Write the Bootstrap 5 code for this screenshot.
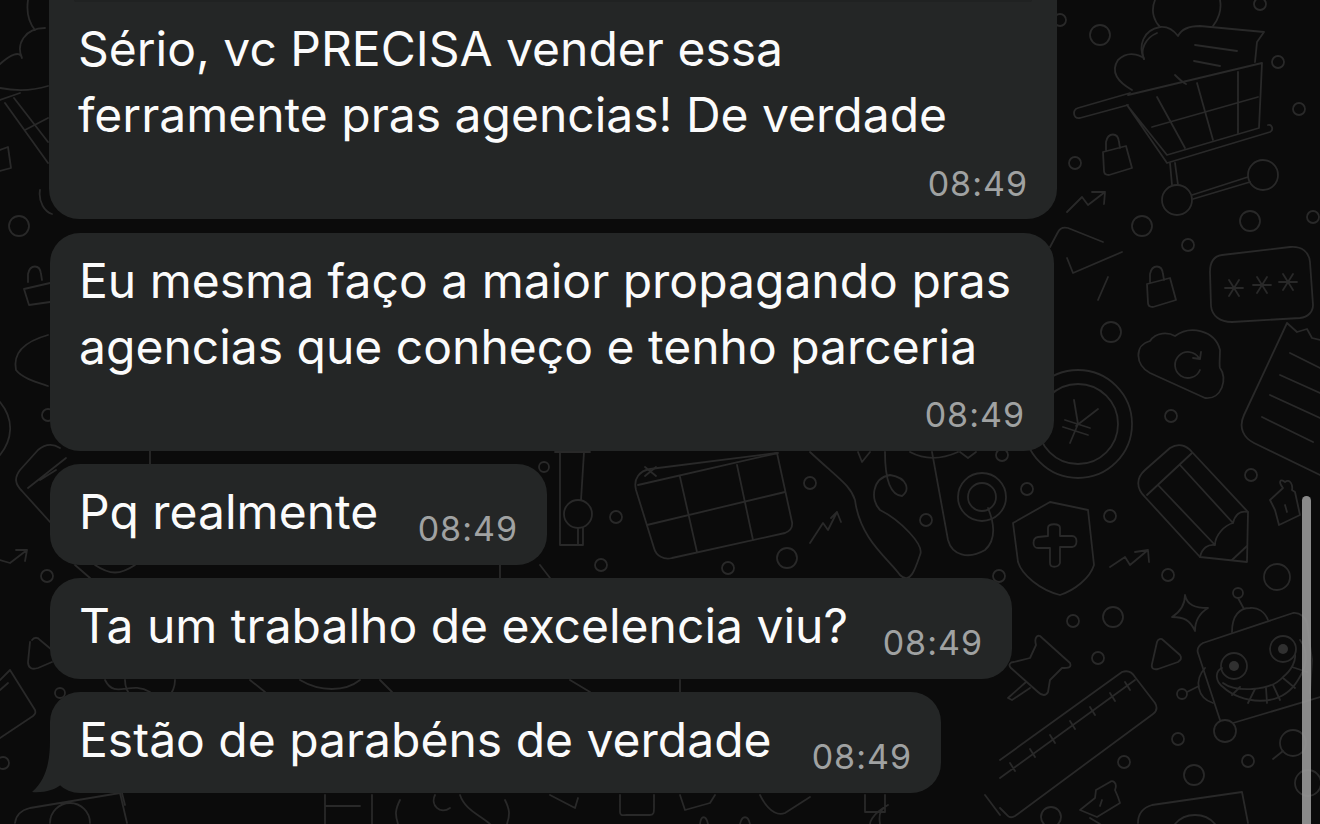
<!DOCTYPE html>
<html lang="pt-BR">
<head>
    <meta charset="UTF-8">
    <meta name="viewport" content="width=device-width, initial-scale=1.0">
    <title>Conversa</title>
    <link href="https://cdn.jsdelivr.net/npm/bootstrap@5.3.3/dist/css/bootstrap.min.css" rel="stylesheet">
    <style>
        html, body { height: 100%; }
        body {
            background: #0b0b0b;
            font-family: "Inter", "Liberation Sans", sans-serif;
            overflow: hidden;
        }
        .chat-screen { width: 1320px; height: 824px; overflow: hidden; }
        .doodles { position: absolute; left: 0; top: 0; width: 1320px; height: 824px; }
        .doodles * { fill: none; stroke: #292929; stroke-width: 1.8; stroke-linecap: round; stroke-linejoin: round; }
        .doodles .dot { fill: #303030; stroke: none; }
        .chat-list { gap: 13px; padding-left: 50px; }
        .bubble {
            background: #242626;
            border-radius: 30px;
            color: #fbfbfb;
            padding: 15px 29px 16px 29px;
        }
        .bubble-text { font-size: 48px; line-height: 66px; letter-spacing: 0; margin: 0; white-space: nowrap; }
        .bubble-time { font-size: 34px; line-height: 40px; color: #a0a2a2; letter-spacing: 1px; white-space: nowrap; }
        .time-below { margin-top: 15px; }
        .time-side { margin-top: 30px; }
        .b-first { width: 1008px; margin-left: -1px; height: 219px; padding-top: 16px; border-radius: 0 0 30px 30px; margin-bottom: 1px; }
        .b-first .time-below { margin-top: 16px; }
        .b-second { width: 1004px; height: 218px; }
        .b-third { width: 497px; height: 101px; }
        .b-fourth { width: 962px; height: 101px; }
        .b-fifth { width: 891px; height: 101px; }
        .top-seam { left: 25px; right: 25px; top: 0; height: 2px; background: #202222; border-radius: 0 0 4px 4px; }
        .bubble-tail { position: absolute; left: -18px; bottom: 0; width: 30px; height: 53px; }
        .scroll-thumb {
            position: absolute; left: 1302px; top: 496px; width: 9px; height: 340px;
            background: rgba(150, 150, 150, .92); border-radius: 5px;
        }
    </style>
</head>
<body>
    <div class="chat-screen position-relative">
        <!-- papel de parede -->
        <svg class="doodles" viewBox="0 0 1320 824" aria-hidden="true">
            <!-- circulos soltos -->
            <circle cx="1100" cy="35" r="10"/><circle cx="1278" cy="62" r="6"/><circle cx="1299" cy="109" r="6"/>
            <circle cx="1075" cy="163" r="6"/><circle cx="1142" cy="226" r="10"/><circle cx="1188" cy="245" r="6"/>
            <circle cx="1250" cy="221" r="10"/><circle cx="1313" cy="217" r="6"/><circle cx="1260" cy="4" r="6"/>
            <circle cx="1060" cy="20" r="6"/><circle cx="1111" cy="332" r="10"/><circle cx="1171" cy="416" r="6"/>
            <circle cx="1251" cy="475" r="6"/><circle cx="1027" cy="489" r="6"/><circle cx="1110" cy="516" r="6"/>
            <circle cx="1168" cy="575" r="6"/><circle cx="1277" cy="577" r="13"/><circle cx="1113" cy="617" r="10"/>
            <circle cx="1073" cy="621" r="6"/><circle cx="1098" cy="658" r="6"/><circle cx="1248" cy="761" r="6"/>
            <circle cx="1194" cy="775" r="10"/><circle cx="1178" cy="739" r="6"/><circle cx="1124" cy="762" r="6"/>
            <circle cx="1051" cy="817" r="10"/><circle cx="1308" cy="783" r="13"/><circle cx="616" cy="517" r="6"/>
            <circle cx="601" cy="565" r="6"/><circle cx="728" cy="568" r="6"/><circle cx="787" cy="558" r="10"/>
            <circle cx="810" cy="483" r="6"/><circle cx="926" cy="520" r="6"/><circle cx="1002" cy="455" r="6"/>
            <circle cx="999" cy="576" r="6"/><circle cx="19" cy="226" r="10"/><circle cx="47" cy="576" r="6"/>
            <circle cx="3" cy="763" r="6"/><circle cx="48" cy="415" r="6"/><circle cx="544" cy="467" r="5"/>
            <circle cx="60" cy="693" r="5"/>

            <!-- carrinho -->
            <path d="M1130 93 1078 108c-6 2-5 11 2 10l48-13"/>
            <path d="M1128 95 1262 63 1259 128 1167 155 1127 105 1167 163 1270 132c4-2 2-8-2-7"/>
            <path d="M1157 97 1185 148M1197 83 1213 140M1238 72V133M1152 127 1258 97"/>
            <circle cx="1177" cy="200" r="15"/><circle cx="1263" cy="175" r="15"/>
            <path d="M1192 195 1248 177M1193 199 1250 182M1170 163 1172 185M1175 163 1178 185"/>
            <path d="M1132 90C1118 82 1110 72 1118 60 1130 48 1145 58 1144 59 1138 46 1143 30 1160 27 1170 26 1175 32 1178 36 1182 28 1190 26 1200 26L1264 32 1257 42 1255 62"/>
            <path d="M1144 59C1140 50 1145 38 1157 33M1195 45 1237 51M1194 61 1220 66M1175 75C1180 80 1182 82 1186 84"/>
            <path d="M1155 0C1150 12 1155 22 1160 27M1220 0C1222 10 1218 20 1213 26"/>
            <!-- cadeados -->
            <path d="M1103 152 1126 146 1132 168 1109 175C1106 175 1104 174 1104 171ZM1106 150V142C1108 132 1118 132 1119 142L1120 148"/>
            <path d="M1147 284 1170 278 1176 300 1153 307C1150 307 1148 306 1148 303ZM1150 282V274C1152 264 1162 264 1163 274L1164 280"/>
            <path d="M24 289 50 283M24 289 29 305 50 302M28 282V274C30 264 40 264 41 274L42 280"/>
            <path d="M1067 212 1082 197 1088 205 1105 192M1092 192 1105 192 1104 204"/>
            <path d="M1050 247 1058 232C1060 228 1064 227 1068 228L1103 242M1067 258 1073 273 1122 252M1108 277 1098 300"/>
            <!-- senha -->
            <path d="M1222 255 1290 247C1302 246 1309 252 1310 262L1313 305C1313 312 1308 317 1300 318L1232 322C1220 322 1212 316 1211 306L1210 272C1210 262 1214 256 1222 255Z"/>
            <path d="M1225 288H1243M1229 280 1239 296M1239 280 1229 296M1253 285H1271M1257 277 1267 293M1267 277 1257 293M1279 282H1297M1283 274 1293 290M1293 274 1283 290"/>
            <!-- nuvem -->
            <path d="M1150 373C1135 365 1134 345 1150 341 1156 332 1168 332 1175 336 1190 325 1215 330 1220 350 1220 358 1219 365 1220 368 1228 378 1222 400 1205 398Z"/>
            <path d="M1199 358A13 13 0 1 0 1200 370M1201 352 1200 359 1193 358"/>
            <!-- moeda -->
            <circle cx="1078" cy="424" r="54"/><circle cx="1078" cy="424" r="40"/>
            <path d="M1074 400 1078 424 1070 443M1098 409 1076 426M1065 420 1090 428M1063 427 1088 435"/>
            <!-- recibo -->
            <path d="M1287 323 1244 415C1238 428 1244 438 1254 443L1320 475M1287 323 1297 332 1307 329 1312 338 1320 340"/>
            <path d="M1290 353 1320 368M1280 375 1320 393M1270 395 1320 418M1262 417 1313 442"/>
            <!-- lapis -->
            <path d="M1145 497 1200 557 1247 562 1248 512 1192 452C1186 445 1178 443 1170 448L1145 470C1136 478 1136 488 1145 497Z"/>
            <path d="M1192 453 1147 495M1180 465 1233 523M1158 485 1215 545M1233 523C1235 515 1240 510 1248 512M1215 545C1215 535 1225 525 1233 523M1200 557C1202 548 1208 544 1215 545M1232 560 1247 546"/>
            <!-- tacha -->
            <path d="M1270 500 1283 488C1278 482 1280 478 1285 482 1290 478 1293 485 1292 490L1295 492 1300 515 1279 525 1275 510ZM1285 505 1287 512"/>
            <!-- escudo -->
            <path d="M1013 523 1050 502 1088 510 1094 565C1090 578 1075 590 1060 595 1040 590 1022 575 1018 562Z"/>
            <path d="M1048 530C1048 525 1060 525 1060 530V538H1072C1078 538 1078 548 1072 549H1060V565C1058 570 1050 570 1050 565V550H1038C1032 550 1032 540 1038 539L1048 538Z" transform="translate(0 -2)"/>
            <path d="M1110 567 1125 557 1130 565 1148 550M1135 552 1148 550 1149 562"/>
            <!-- estrela -->
            <path d="M1185 595C1187 605 1195 608 1208 608 1198 614 1195 622 1195 631 1190 620 1184 617 1172 617 1180 612 1185 606 1185 595Z"/>
            <path d="M1163 640 1180 655C1182 658 1181 660 1178 662L1158 669C1153 670 1151 668 1152 664L1157 642C1158 639 1161 638 1163 640Z"/>
            <!-- alfinete -->
            <path d="M1040 636 1070 663C1072 668 1068 668 1062 668L1050 680 1048 692C1046 696 1042 696 1038 692L1011 668C1008 665 1010 662 1014 662L1030 658 1036 645C1034 638 1037 635 1040 636ZM1026 682 1008 698 1012 700 1030 688"/>
            <!-- regua -->
            <path d="M1000 760 1122 672C1128 670 1132 672 1135 677L1155 703C1158 708 1157 711 1153 714L1015 816C1012 818 1009 818 1006 814L1000 808"/>
            <path d="M1000 778 1135 680M1010 763 1015 771M1030 749 1035 757M1050 735 1055 743M1070 721 1075 729M1090 707 1095 715M1110 693 1115 701M1125 682 1130 690"/>
            <!-- robo -->
            <path d="M1203 643 1293 613C1300 612 1306 618 1307 623L1312 660 1310 693M1203 643C1198 646 1197 650 1198 653L1220 720M1233 723 1320 697"/>
            <circle cx="1234" cy="666" r="13"/><circle class="dot" cx="1234" cy="666" r="5"/>
            <circle cx="1283" cy="649" r="13"/><circle class="dot" cx="1283" cy="649" r="5"/>
            <path d="M1222 668C1214 672 1216 682 1223 687 1240 703 1280 710 1298 680 1308 665 1308 650 1300 640M1223 683C1235 692 1270 692 1283 677 1292 670 1296 660 1295 655"/>
            <path d="M1232 695 1240 687M1248 703 1255 689M1267 703 1266 688M1280 700 1273 685M1295 688 1283 678M1307 672 1292 667"/>
            <path d="M1232 632C1232 615 1240 608 1250 608 1258 607 1265 612 1268 620M1238 598 1244 609M1205 668C1194 680 1197 698 1213 703M1187 692 1199 686"/>
            <circle cx="1238" cy="593" r="5"/><circle cx="1182" cy="694" r="5"/><circle cx="1225" cy="731" r="11"/>
            <circle cx="1293" cy="743" r="13"/><path d="M1273 759 1283 751"/>
            <!-- tacha de baixo -->
            <path d="M1096 790 1110 782C1112 780 1118 782 1115 790L1118 797 1120 803 1097 817 1080 810 1095 798ZM1100 806 1102 800M1090 818 1100 824"/>
            <path d="M1138 823C1138 814 1142 808 1152 805L1242 792 1248 823M1175 824C1185 812 1205 812 1215 824"/>
            <!-- tabela -->
            <path d="M650 469 777 453 792 522C793 528 790 531 785 533L672 558C664 560 656 556 654 548L636 490C633 478 640 471 650 469Z"/>
            <path d="M638 485 778 453M647 525 785 492M680 477 697 552M737 465 753 540M645 467 656 476M656 467 645 476"/>
            <circle cx="578" cy="514" r="14"/>
            <path d="M560 452V545H583V528M584 452 581 500M578 528V545M555 452H590"/>
            <!-- mouse e alvo -->
            <path d="M810 452 C840 480 850 485 855 500 860 540 890 560 900 575 910 585 915 570 920 555 925 545 900 520 880 510 870 500 872 478 890 475 908 478 910 490 902 496 890 495 885 480 885 452"/>
            <path d="M810 543 823 523 828 530 837 512M831 518 837 512 841 522"/>
            <path d="M932 452 948 540C952 555 968 560 985 550 996 540 995 525 988 508"/>
            <circle cx="982" cy="497" r="24"/><circle cx="982" cy="497" r="14"/>
            <path d="M858 452 862 462 870 452M910 452C925 460 940 460 958 452"/>
            <!-- abaixo das bolhas -->
            <path d="M325 795V824M372 795V824M326 806H360M400 800C395 810 395 815 398 824M505 800C510 810 510 815 507 824M435 795C430 805 440 815 450 808M460 795C465 810 480 815 490 824"/>
            <path d="M550 795 575 808 578 798M620 795V812C620 816 623 815 626 815H650C654 815 654 812 654 808V795M680 795 685 810 710 803 715 795M760 795C770 815 780 815 785 813L810 797M880 824C878 812 882 808 888 805 870 815 870 824 870 824M740 824C742 815 748 815 750 824M700 824C701 815 706 815 708 824M865 795V812H885V795M985 795 1000 815"/>
            <path d="M15 823C16 814 22 810 30 808L120 793 127 823M50 823A20 20 0 0 1 90 823M122 793 125 805"/>
            <path d="M105 680C115 700 130 680 150 692M125 680A14 14 0 0 0 175 680"/>
            <path d="M960 452 968 458 976 452"/>
            <!-- canto esquerdo -->
            <path d="M0 64C10 55 20 50 22 58 16 45 24 28 45 28M28 0C26 14 30 24 35 30M0 88C20 92 35 90 48 86M0 100 20 93M5 103 48 163M14 98 48 142M25 130 48 118M40 190C38 202 45 212 52 214"/>
            <path d="M0 150 8 147 11 168 0 171"/>
            <path d="M48 335C30 340 12 350 16 370 22 378 36 382 48 386"/>
            <path d="M0 402C15 420 12 440 0 455"/>
            <path d="M60 448C52 443 44 445 38 450L20 470C14 478 15 484 22 491L50 522M66 458 28 488M56 470 40 480"/>
            <path d="M0 560 10 563 27 550M16 550 27 550 25 561"/>
            <path d="M40 640 52 650M30 642 28 662C28 668 32 670 38 668L52 662M32 640C34 637 38 637 40 640"/>
            <path d="M0 680 10 670 35 710C36 713 35 714 33 716L0 738M0 690 8 683"/>
            <path d="M150 450V464M95 565C110 575 120 575 135 565M75 565 90 578M500 565V578M540 565 550 578M250 680 265 692M300 680C320 692 345 692 360 680M380 680 392 692M570 680 590 692M680 680V692"/>
        </svg>

        <div class="chat-list d-flex flex-column position-relative">
            <div class="bubble b-first position-relative">
                <div class="top-seam position-absolute"></div>
                <p class="bubble-text">Sério, vc PRECISA vender essa<br>ferramente pras agencias! De verdade</p>
                <div class="bubble-time time-below text-end">08:49</div>
            </div>
            <div class="bubble b-second">
                <p class="bubble-text">Eu mesma faço a maior propagando pras<br>agencias que conheço e tenho parceria</p>
                <div class="bubble-time time-below text-end">08:49</div>
            </div>
            <div class="bubble b-third d-flex justify-content-between">
                <p class="bubble-text">Pq realmente</p>
                <div class="bubble-time time-side">08:49</div>
            </div>
            <div class="bubble b-fourth d-flex justify-content-between">
                <p class="bubble-text">Ta um trabalho de excelencia viu?</p>
                <div class="bubble-time time-side">08:49</div>
            </div>
            <div class="bubble b-fifth d-flex justify-content-between position-relative">
                <svg class="bubble-tail" viewBox="32 740 30 53" aria-hidden="true">
                    <path fill="#242626" d="M50 740C50 762 46 780 32 792 44 793 55 790 62 784V740Z"/>
                </svg>
                <p class="bubble-text position-relative">Estão de parabéns de verdade</p>
                <div class="bubble-time time-side">08:49</div>
            </div>
        </div>

        <div class="scroll-thumb"></div>
    </div>

    <script src="https://cdn.jsdelivr.net/npm/bootstrap@5.3.3/dist/js/bootstrap.bundle.min.js"></script>
</body>
</html>
